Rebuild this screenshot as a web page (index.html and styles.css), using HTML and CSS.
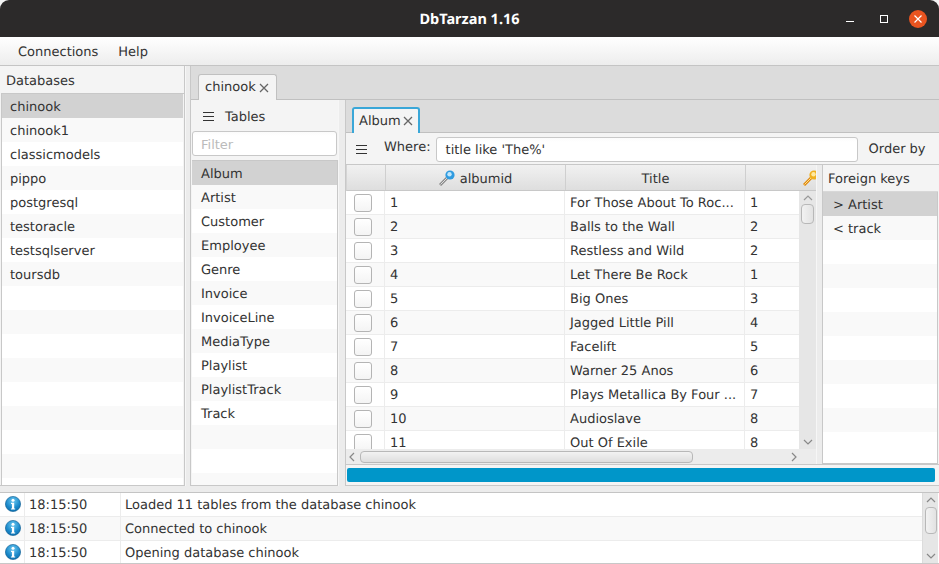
FILE: index.html
```
<!DOCTYPE html>
<html lang="en">
<head>
<meta charset="utf-8">
<title>DbTarzan 1.16</title>
<link rel="stylesheet" href="styles.css">
</head>
<body>
<svg class="defs" width="0" height="0" aria-hidden="true">
  <defs>
    <radialGradient id="infoFill" cx="50%" cy="30%" r="75%"><stop offset="0" stop-color="#6cc8f0"/><stop offset=".6" stop-color="#1c8acb"/><stop offset="1" stop-color="#0a6aa8"/></radialGradient>
    <symbol id="info" viewBox="0 0 16 16"><circle cx="8" cy="8" r="7.6" fill="url(#infoFill)" stroke="#0b5c92" stroke-width=".6"/><circle cx="8" cy="4.2" r="1.5" fill="#fff"/><path d="M6 6.8h3.2v5.6h1v1.2H5.9v-1.2h1V8H6z" fill="#fff"/></symbol>
    <symbol id="burger" viewBox="0 0 11 9"><path d="M0 .5h11M0 4.5h11M0 8.5h11" stroke="#333" stroke-width="1" fill="none"/></symbol>
    <symbol id="close" viewBox="0 0 10 10"><path d="M1 1l8 8M9 1l-8 8" stroke="#666" stroke-width="1.3" fill="none"/></symbol>
    <symbol id="bluekey" viewBox="0 0 16 16"><path d="M1 15L8 8" stroke="#8a8a8a" stroke-width="3"/><path d="M1.5 14.5L8 8" stroke="#ddd" stroke-width="1"/><circle cx="11" cy="5" r="4.6" fill="#2f9be0"/><circle cx="10.5" cy="4.2" r="2.2" fill="#bfe6fb"/></symbol>
    <symbol id="goldkey" viewBox="0 0 16 16"><path d="M1 15L8 8" stroke="#e08a10" stroke-width="3"/><path d="M1.5 14.5L8 8" stroke="#ffe08a" stroke-width="1"/><circle cx="11" cy="5" r="4.6" fill="#f0b020"/><circle cx="10.5" cy="4.2" r="2.2" fill="#ffe9a0"/></symbol>
  </defs>
</svg>
<div class="window">
  <header class="titlebar">
    <div class="title">DbTarzan 1.16</div>
    <div class="winctl">
      <span class="wc-min"></span>
      <span class="wc-max"></span>
      <span class="wc-close"><svg width="10" height="10" viewBox="0 0 10 10"><path d="M1.5 1.5l7 7M8.5 1.5l-7 7" stroke="#fff" stroke-width="1.2"/></svg></span>
    </div>
  </header>
  <nav class="menubar"><span>Connections</span><span>Help</span></nav>
  <main class="main">
    <section class="db-panel">
      <div class="panel-head">Databases</div>
      <div class="list">
        <div class="row sel">chinook</div>
        <div class="row">chinook1</div>
        <div class="row">classicmodels</div>
        <div class="row">pippo</div>
        <div class="row">postgresql</div>
        <div class="row">testoracle</div>
        <div class="row">testsqlserver</div>
        <div class="row">toursdb</div>
        <div class="row"></div><div class="row"></div><div class="row"></div><div class="row"></div>
        <div class="row"></div><div class="row"></div><div class="row"></div><div class="row"></div><div class="row"></div>
      </div>
    </section>
    <div class="vdiv"></div>
    <section class="tabpane">
      <div class="tabstrip outer"><div class="tab"><span>chinook</span><svg class="x"><use href="#close"/></svg></div></div>
      <div class="tab-body">
        <section class="tables">
          <div class="tables-head"><svg class="burger"><use href="#burger"/></svg><span>Tables</span></div>
          <input class="filter" placeholder="Filter">
          <div class="list t-list">
            <div class="row sel">Album</div>
            <div class="row">Artist</div>
            <div class="row">Customer</div>
            <div class="row">Employee</div>
            <div class="row">Genre</div>
            <div class="row">Invoice</div>
            <div class="row">InvoiceLine</div>
            <div class="row">MediaType</div>
            <div class="row">Playlist</div>
            <div class="row">PlaylistTrack</div>
            <div class="row">Track</div>
            <div class="row"></div><div class="row"></div><div class="row"></div>
          </div>
        </section>
        <div class="vdiv inner-div"></div>
        <section class="inner">
          <div class="tabstrip innerstrip"><div class="tab focus"><span>Album</span><svg class="x"><use href="#close"/></svg></div></div>
          <div class="toolbar">
            <svg class="burger"><use href="#burger"/></svg>
            <label class="where">Where:</label>
            <div class="where-input">title like 'The%'</div>
            <span class="order">Order by</span>
          </div>
          <div class="grid-split">
            <div class="grid">
              <div class="ghead">
                <div class="hc c0"></div>
                <div class="hc c1"><svg class="key"><use href="#bluekey"/></svg><span>albumid</span></div>
                <div class="hc c2">Title</div>
                <div class="hc c3"><svg class="key"><use href="#goldkey"/></svg></div>
              </div>
              <div class="gmid">
                <div class="gbody">
                  <div class="gr"><div class="c c0"><i class="chk"></i></div><div class="c c1">1</div><div class="c c2">For Those About To Roc...</div><div class="c c3">1</div></div>
                  <div class="gr"><div class="c c0"><i class="chk"></i></div><div class="c c1">2</div><div class="c c2">Balls to the Wall</div><div class="c c3">2</div></div>
                  <div class="gr"><div class="c c0"><i class="chk"></i></div><div class="c c1">3</div><div class="c c2">Restless and Wild</div><div class="c c3">2</div></div>
                  <div class="gr"><div class="c c0"><i class="chk"></i></div><div class="c c1">4</div><div class="c c2">Let There Be Rock</div><div class="c c3">1</div></div>
                  <div class="gr"><div class="c c0"><i class="chk"></i></div><div class="c c1">5</div><div class="c c2">Big Ones</div><div class="c c3">3</div></div>
                  <div class="gr"><div class="c c0"><i class="chk"></i></div><div class="c c1">6</div><div class="c c2">Jagged Little Pill</div><div class="c c3">4</div></div>
                  <div class="gr"><div class="c c0"><i class="chk"></i></div><div class="c c1">7</div><div class="c c2">Facelift</div><div class="c c3">5</div></div>
                  <div class="gr"><div class="c c0"><i class="chk"></i></div><div class="c c1">8</div><div class="c c2">Warner 25 Anos</div><div class="c c3">6</div></div>
                  <div class="gr"><div class="c c0"><i class="chk"></i></div><div class="c c1">9</div><div class="c c2">Plays Metallica By Four ...</div><div class="c c3">7</div></div>
                  <div class="gr"><div class="c c0"><i class="chk"></i></div><div class="c c1">10</div><div class="c c2">Audioslave</div><div class="c c3">8</div></div>
                  <div class="gr"><div class="c c0"><i class="chk"></i></div><div class="c c1">11</div><div class="c c2">Out Of Exile</div><div class="c c3">8</div></div>
                </div>
                <div class="vbar">
                  <svg class="arrow" width="10" height="6" viewBox="0 0 10 6"><path d="M1 5l4-4 4 4" fill="none" stroke="#999" stroke-width="1.2"/></svg>
                  <div class="vthumb"></div>
                  <div class="grow"></div>
                  <svg class="arrow" width="10" height="6" viewBox="0 0 10 6"><path d="M1 1l4 4 4-4" fill="none" stroke="#888" stroke-width="1.2"/></svg>
                </div>
              </div>
              <div class="hbar">
                <svg class="arrow" width="6" height="10" viewBox="0 0 6 10"><path d="M5 1L1 5l4 4" fill="none" stroke="#888" stroke-width="1.2"/></svg>
                <div class="hthumb"></div>
                <svg class="arrow" width="6" height="10" viewBox="0 0 6 10"><path d="M1 1l4 4-4 4" fill="none" stroke="#888" stroke-width="1.2"/></svg>
              </div>
            </div>
            <div class="vdiv fk-div"></div>
            <aside class="fk">
              <div class="panel-head fk-head">Foreign keys</div>
              <div class="list">
                <div class="row sel fkrow">&gt; Artist</div>
                <div class="row fkrow">&lt; track</div>
                <div class="row"></div><div class="row"></div><div class="row"></div><div class="row"></div>
                <div class="row"></div><div class="row"></div><div class="row"></div><div class="row"></div>
                <div class="row"></div>
              </div>
            </aside>
          </div>
          <div class="progress"><div class="bar"></div></div>
        </section>
      </div>
    </section>
  </main>
  <div class="hdiv"></div>
  <section class="log">
    <div class="logbody">
      <div class="lr"><div class="l0"><svg class="info"><use href="#info"/></svg></div><div class="l1">18:15:50</div><div class="l2">Loaded 11 tables from the database chinook</div></div>
      <div class="lr"><div class="l0"><svg class="info"><use href="#info"/></svg></div><div class="l1">18:15:50</div><div class="l2">Connected to chinook</div></div>
      <div class="lr"><div class="l0"><svg class="info"><use href="#info"/></svg></div><div class="l1">18:15:50</div><div class="l2">Opening database chinook</div></div>
    </div>
    <div class="vbar logbar">
      <svg class="arrow" width="10" height="6" viewBox="0 0 10 6"><path d="M1 5l4-4 4 4" fill="none" stroke="#888" stroke-width="1.2"/></svg>
      <div class="vthumb logthumb"></div>
      <div class="grow"></div>
      <svg class="arrow" width="10" height="6" viewBox="0 0 10 6"><path d="M1 1l4 4 4-4" fill="none" stroke="#888" stroke-width="1.2"/></svg>
    </div>
  </section>
</div>
</body>
</html>
```
FILE: styles.css
```
* { box-sizing: border-box; }
html, body { margin: 0; padding: 0; height: 100%; overflow: hidden; background: #f4f4f4; }
body { font-family: "DejaVu Sans", sans-serif; font-size: 13px; color: #333; text-rendering: geometricPrecision; }
.defs { display: block; height: 0; }
.window { width: 939px; height: 564px; display: flex; flex-direction: column; overflow: hidden; }

.titlebar { height: 37px; flex: none; background: #2c2a2a; border-radius: 9px 9px 0 0; position: relative; display: flex; align-items: center; justify-content: center; }
.title { color: #fff; font-family: "Noto Sans", sans-serif; font-weight: 700; font-size: 14.5px; }
.winctl { position: absolute; right: 12px; top: 10px; display: flex; align-items: center; height: 18px; }
.wc-min { width: 8px; height: 1px; background: #fff; margin-top: 4px; margin-right: 26px; }
.wc-max { width: 8px; height: 8px; border: 1px solid #fff; margin-right: 21px; }
.wc-close { width: 18px; height: 18px; border-radius: 50%; background: #e95420; display: flex; align-items: center; justify-content: center; }

.menubar { height: 29px; flex: none; padding: 3px 18px 0; display: flex; align-items: center; gap: 20px; background: linear-gradient(#ffffff, #ededed); border-bottom: 1px solid #c4c4c4; }

.main { height: 420px; flex: none; display: flex; }
.db-panel { width: 185px; flex: none; display: flex; flex-direction: column; padding: 1px 0 0 1px; border-right: 1px solid #c8c8c8; border-bottom: 1px solid #c8c8c8; }
.panel-head { height: 27px; flex: none; padding: 2px 0 0 5px; display: flex; align-items: center; background: #f4f4f4; border-bottom: 1px solid #c8c8c8; }
.list { flex: 1; overflow: hidden; background: #fff; border-left: 1px solid #c8c8c8; border-right: 1px solid #c8c8c8; }
.db-panel .list { border-right: 0; margin-right: 1px; }
.row { height: 24px; padding: 2px 0 0 8px; display: flex; align-items: center; background: #fff; }
.row:nth-child(even) { background: #f9f9f9; }
.row.sel { background: #d2d2d2; }
.vdiv { width: 6px; flex: none; background: #ececec; border-left: 1px solid #f6f6f6; border-right: 1px solid #c8c8c8; }

.tabpane { flex: 1; min-width: 0; display: flex; flex-direction: column; }
.tabstrip { flex: none; display: flex; align-items: flex-end; background: #dcdcdc; border-bottom: 1px solid #c0c0c0; padding-left: 6px; }
.outer { height: 34px; padding-left: 7px; }
.tab { height: 26px; margin-bottom: -1px; padding: 0 7px 0 6px; display: flex; align-items: center; gap: 3px; background: #f4f4f4; border: 1px solid #c0c0c0; border-bottom: 0; border-radius: 3px 3px 0 0; }
.x { width: 10px; height: 10px; }
.focus { border: 2px solid #3aa7d8; border-bottom: 0; padding: 0 5px 0 5px; gap: 2px; }

.tab-body { flex: 1; min-height: 0; display: flex; }
.tables { width: 147px; flex: none; display: flex; flex-direction: column; padding-left: 1px; border-bottom: 1px solid #c8c8c8; }
.tables-head { height: 31px; flex: none; display: flex; align-items: center; gap: 11px; padding-left: 11px; padding-top: 2px; }
.tables-head span { padding-top: 1px; }
.burger { width: 11px; height: 9px; flex: none; }
.filter { height: 25px; flex: none; width: 145px; margin: 0; padding: 1px 8px 0; border: 1px solid #c8c8c8; border-radius: 3px; background: linear-gradient(#fbfbfb, #fff 4px); font: inherit; outline: none; }
.filter::placeholder { color: #bbb; opacity: 1; }
.t-list { margin-top: 4px; border-top: 1px solid #c8c8c8; border-left: 0; }
.t-list .row { padding-left: 9px; }
.inner-div { width: 8px; border-right: 1px solid #c8c8c8; }

.inner { flex: 1; min-width: 0; display: flex; flex-direction: column; }
.innerstrip { height: 33px; }
.toolbar { height: 32px; flex: none; display: flex; align-items: center; padding: 2px 0 0 10px; border-bottom: 1px solid #c8c8c8; }
.where { margin-left: 17px; margin-right: 5px; margin-top: -4px; }
.where-input { width: 422px; height: 25px; padding: 1px 0 0 9px; display: flex; align-items: center; background: linear-gradient(#fbfbfb, #fff 4px); border: 1px solid #c8c8c8; border-radius: 3px; }
.order { margin-left: 11px; }

.grid-split { flex: 1; min-height: 0; display: flex; }
.grid { width: 470px; flex: none; display: flex; flex-direction: column; overflow: hidden; }
.ghead { height: 26px; flex: none; display: flex; background: linear-gradient(#f1f1f1, #dedede); border-bottom: 1px solid #c8c8c8; border-left: 1px solid #d4d4d4; overflow: hidden; }
.hc { flex: none; height: 100%; padding-top: 3px; display: flex; align-items: center; justify-content: center; gap: 5px; border-right: 1px solid #cfcfcf; }
.key { width: 16px; height: 16px; flex: none; margin-top: -3px; }
.c0 { width: 39px; flex: none; }
.c1, .c2, .c3 { width: 180px; flex: none; }
.hc.c3 { justify-content: flex-start; padding-left: 57px; }
.gmid { flex: 1; min-height: 0; display: flex; }
.gbody { flex: 1; min-width: 0; overflow: hidden; background: #fff; }
.gr { height: 24px; display: flex; background: #fff; border-bottom: 1px solid #ececec; }
.gr:nth-child(even) { background: #f9f9f9; }
.c { height: 100%; display: flex; align-items: center; padding: 1px 0 0 5px; border-right: 1px solid #ececec; white-space: nowrap; overflow: hidden; }
.c.c0 { padding: 0 0 0 8px; }
.chk { display: block; width: 18px; height: 18px; border: 1px solid #b4b4b4; border-radius: 3px; background: linear-gradient(#fff, #f4f4f4); }
.vbar { width: 17px; flex: none; background: #e6e6e6; display: flex; flex-direction: column; align-items: center; padding: 4px 0; }
.vbar .arrow { flex: none; }
.vthumb { width: 13px; height: 20px; margin-top: 3px; border: 1px solid #b8b8b8; border-radius: 4px; background: linear-gradient(90deg, #f2f2f2, #e2e2e2); }
.grow { flex: 1; }
.hbar { height: 15px; flex: none; display: flex; align-items: center; padding: 0 19px 0 3px; background: #ececec; }
.hthumb { width: 333px; height: 12px; margin-left: 5px; margin-right: auto; border: 1px solid #b8b8b8; border-radius: 4px; background: linear-gradient(#f2f2f2, #dedede); }
.fk-div { width: 7px; }
.fk { flex: 1; min-width: 0; display: flex; flex-direction: column; padding-right: 1px; }
.fk-head { border-bottom: 1px solid #d8d8d8; }
.fk .list { border-right: 1px solid #c8c8c8; border-bottom: 1px solid #c8c8c8; border-left: 0; }
.fkrow { padding-left: 10px; }

.progress { height: 22px; flex: none; padding: 3px 4px 3px 1px; background: #f4f4f4; border-top: 1px solid #c8c8c8; border-bottom: 1px solid #c8c8c8; }
.bar { height: 100%; border-radius: 2px; background: #0096c9; }

.hdiv { height: 6px; flex: none; background: #ececec; }
.log { flex: 1; min-height: 0; display: flex; background: #fff; border-top: 1px solid #c4c4c4; border-bottom: 1px solid #c8c8c8; padding-right: 1px; }
.logbody { flex: 1; min-width: 0; overflow: hidden; }
.lr { height: 24px; display: flex; background: #fff; border-bottom: 1px solid #ececec; }
.lr:nth-child(even) { background: #f9f9f9; }
.l0 { width: 25px; flex: none; display: flex; align-items: center; justify-content: center; padding: 0 0 1px 1px; border-right: 1px solid #ececec; }
.info { width: 16px; height: 16px; }
.l1 { width: 96px; flex: none; display: flex; align-items: center; padding: 1px 0 0 4px; border-right: 1px solid #ececec; }
.l2 { flex: 1; display: flex; align-items: center; padding: 1px 0 0 4px; }
.logbar { width: 16px; border-left: 1px solid #dcdcdc; }
.logthumb { width: 12px; height: 27px; margin-top: 4px; }
```
